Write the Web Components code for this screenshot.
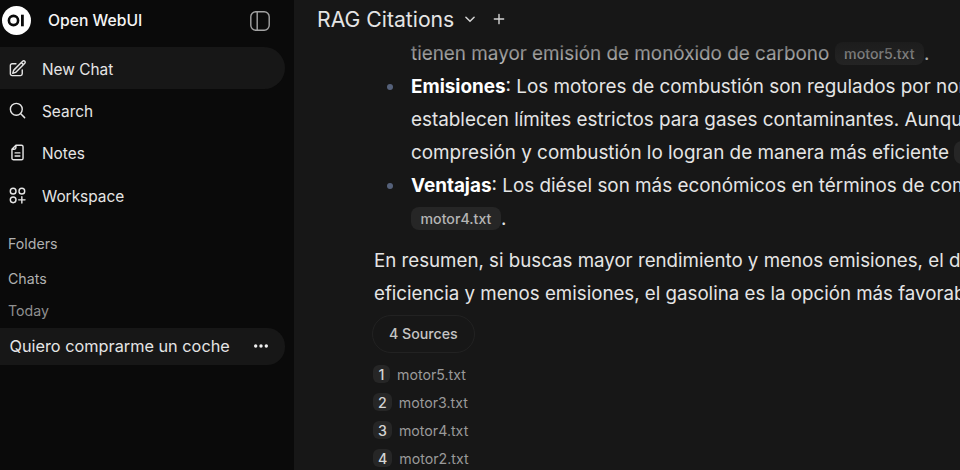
<!DOCTYPE html>
<html>
<head>
<meta charset="utf-8">
<style>
    html, body {
        margin: 0;
        height: 100%;
        background: #171717;
        overflow: hidden;
        font-family: Inter, "Liberation Sans", sans-serif;
    }
</style>
</head>
<body>
<app-shell>
    <side-bar slot="side">
        <nav-item label="New Chat" icon="edit" active></nav-item>
        <nav-item label="Search" icon="search"></nav-item>
        <nav-item label="Notes" icon="notes"></nav-item>
        <nav-item label="Workspace" icon="workspace"></nav-item>
    </side-bar>
    <chat-view slot="main">
        <chat-message></chat-message>
    </chat-view>
</app-shell>

<script>
const ICONS = {
    edit: `<path d="m16.862 4.487 1.687-1.688a1.875 1.875 0 1 1 2.652 2.652L10.582 16.07a4.5 4.5 0 0 1-1.897 1.13L6 18l.8-2.685a4.5 4.5 0 0 1 1.13-1.897l8.932-8.931Zm0 0L19.5 7.125M18 14v4.75A2.25 2.25 0 0 1 15.75 21H5.25A2.25 2.25 0 0 1 3 18.75V8.25A2.25 2.25 0 0 1 5.25 6H10"/>`,
    search: `<path d="m21 21-5.197-5.197m0 0A7.5 7.5 0 1 0 5.196 5.196a7.5 7.5 0 0 0 10.607 10.607Z"/>`,
    notes: `<path d="M10 2.8h7a2 2 0 0 1 2 2v14.4a2 2 0 0 1-2 2H7a2 2 0 0 1-2-2V7.8Z M10 2.8v3a2 2 0 0 1-2 2H5 M9 12.5h6 M9 16.5h6"/>`,
    workspace: `<circle cx="6.5" cy="6.5" r="3.6"/><circle cx="17.5" cy="6.5" r="3.6"/><circle cx="6.5" cy="17.5" r="3.6"/><path d="M17.5 13.5v8 M13.5 17.5h8"/>`
};

class AppShell extends HTMLElement {
    constructor() {
        super();
        this.attachShadow({mode: 'open'});
        this.shadowRoot.innerHTML = `
        <style>
            :host {
                display: grid;
                grid-template-columns: 294px 1fr;
                width: 960px;
                height: 470px;
                overflow: hidden;
            }
        </style>
        <slot name="side"></slot>
        <slot name="main"></slot>
        `;
    }
}

class SideBar extends HTMLElement {
    constructor() {
        super();
        this.attachShadow({mode: 'open'});
        this.shadowRoot.innerHTML = `
        <style>
            :host {
                display: block;
                height: 470px;
                background: #0a0a0a;
                color: #e5e5e5;
                overflow: hidden;
            }
            .top {
                display: flex;
                align-items: center;
                height: 41px;
                padding: 0 0 0 2px;
            }
            .brand {
                margin-left: 17px;
                font-size: 15.7px;
                font-weight: 500;
                color: #f5f5f5;
            }
            .toggle {
                margin-left: auto;
                margin-right: 24px;
                display: flex;
                color: #a3a3a3;
            }
            .nav {
                display: flex;
                flex-direction: column;
                padding: 6px 9px 0 0;
                gap: 0;
            }
            .label {
                padding-left: 8px;
                font-size: 14.2px;
                line-height: 20px;
                color: #b0b0b0;
            }
            .folders { margin-top: 17px; }
            .chats { margin-top: 15px; }
            .today { margin-top: 12px; color: #8f8f8f; }
            .chat {
                display: flex;
                align-items: center;
                justify-content: space-between;
                height: 37px;
                margin: 7px 9px 0 0;
                padding: 0 16px 0 9.5px;
                background: #171717;
                border-radius: 0 18px 18px 0;
                font-size: 16.3px;
                color: #e5e5e5;
            }
            .dots { display: flex; }
        </style>
        <div class="top">
            <svg width="29" height="29" viewBox="0 0 29 29">
                <circle cx="14.5" cy="14.5" r="14.5" fill="#fff"/>
                <circle cx="11.5" cy="14.5" r="4.6" fill="none" stroke="#0a0a0a" stroke-width="2.6"/>
                <rect x="19" y="8.7" width="2.8" height="11.6" fill="#0a0a0a"/>
            </svg>
            <span class="brand">Open WebUI</span>
            <span class="toggle">
                <svg width="20" height="20" viewBox="0 0 20 20" fill="none" stroke="currentColor" stroke-width="1.4">
                    <rect x="0.8" y="0.8" width="18.4" height="18.4" rx="5"/>
                    <path d="M7.2 1v18"/>
                </svg>
            </span>
        </div>
        <div class="nav"><slot></slot></div>
        <div class="label folders">Folders</div>
        <div class="label chats">Chats</div>
        <div class="label today">Today</div>
        <div class="chat">
            <span>Quiero comprarme un coche</span>
            <span class="dots">
                <svg width="16" height="16" viewBox="0 0 16 16" fill="#f0f0f0">
                    <circle cx="2.7" cy="8" r="1.7"/><circle cx="8" cy="8" r="1.7"/><circle cx="13.3" cy="8" r="1.7"/>
                </svg>
            </span>
        </div>
        `;
    }
}

class NavItem extends HTMLElement {
    connectedCallback() {
        if (this.shadowRoot) return;
        this.attachShadow({mode: 'open'});
        this.shadowRoot.innerHTML = `
        <style>
            :host {
                display: flex;
                align-items: center;
                gap: 15px;
                height: 42.4px;
                padding-left: 8px;
                font-size: 15.4px;
                color: #e5e5e5;
                border-radius: 0 21px 21px 0;
            }
            :host([active]) { background: #171717; }
            svg { flex: none; }
            span { position: relative; top: 1px; }
        </style>
        <svg width="19" height="19" viewBox="0 0 24 24" fill="none" stroke="currentColor" stroke-width="1.8" stroke-linecap="round" stroke-linejoin="round">${ICONS[this.getAttribute('icon')]}</svg>
        <span>${this.getAttribute('label')}</span>
        `;
    }
}

class ChatView extends HTMLElement {
    constructor() {
        super();
        this.attachShadow({mode: 'open'});
        this.shadowRoot.innerHTML = `
        <style>
            :host {
                display: block;
                position: relative;
                height: 470px;
                background: #171717;
                overflow: hidden;
            }
            .bar {
                position: absolute;
                top: 0;
                left: 0;
                right: 0;
                height: 72px;
                background: linear-gradient(#171717 0, #171717 27px, rgba(23,23,23,0.8) 34px, rgba(23,23,23,0) 72px);
                pointer-events: none;
            }
            .title {
                display: flex;
                align-items: center;
                height: 38px;
                padding-left: 23px;
                font-size: 21.2px;
                color: #e5e5e5;
            }
            .title svg { margin-left: 9px; color: #d4d4d4; }
            .title svg + svg { margin-left: 15px; }
        </style>
        <slot></slot>
        <div class="bar">
            <div class="title">
                <span>RAG Citations</span>
                <svg width="14" height="14" viewBox="0 0 24 24" fill="none" stroke="currentColor" stroke-width="2.6" stroke-linecap="round" stroke-linejoin="round"><path d="m5 9 7 7 7-7"/></svg>
                <svg width="14" height="14" viewBox="0 0 24 24" fill="none" stroke="currentColor" stroke-width="2.4" stroke-linecap="round"><path d="M12 4v16 M4 12h16"/></svg>
            </div>
        </div>
        `;
    }
}

class CitationChip extends HTMLElement {
    constructor() {
        super();
        this.attachShadow({mode: 'open'});
        this.shadowRoot.innerHTML = `
        <style>
            :host {
                display: inline-block;
                padding: 0 9.5px;
                height: 23px;
                line-height: 23px;
                vertical-align: 1px;
                border-radius: 8px;
                background: #262626;
                font-size: 14.2px;
                font-weight: 500;
                color: #b5b5b5;
            }
        </style>
        <slot></slot>
        `;
    }
}

class SourceRow extends HTMLElement {
    connectedCallback() {
        if (this.shadowRoot) return;
        this.attachShadow({mode: 'open'});
        this.shadowRoot.innerHTML = `
        <style>
            :host {
                display: flex;
                align-items: center;
                gap: 7px;
                height: 28px;
                margin-left: -1px;
                font-size: 14.2px;
                color: #9a9a9a;
            }
            .num {
                display: flex;
                align-items: center;
                justify-content: center;
                min-width: 7px;
                height: 18px;
                padding: 0 5px;
                border-radius: 6px;
                background: #262626;
                font-size: 14.2px;
                font-weight: 500;
                color: #d4d4d4;
            }
        </style>
        <span class="num">${this.getAttribute('n')}</span>
        <span><slot></slot></span>
        `;
    }
}

class ChatMessage extends HTMLElement {
    constructor() {
        super();
        this.attachShadow({mode: 'open'});
        this.shadowRoot.innerHTML = `
        <style>
            :host {
                display: block;
                padding: 37px 0 0 80px;
                font-size: 18.86px;
                line-height: 33px;
                color: #e5e5e5;
                white-space: nowrap;
            }
            ul {
                margin: 0;
                padding: 0 0 0 37px;
                list-style: none;
            }
            li { position: relative; }
            li.dot::before {
                content: "";
                position: absolute;
                left: -24px;
                top: 14px;
                width: 6px;
                height: 6px;
                border-radius: 50%;
                background: #55617a;
            }
            b { font-weight: 700; color: #fff; }
            p { margin: 9px 0 0; font-size: 18.72px; }
            .sources {
                display: inline-flex;
                align-items: center;
                height: 36px;
                margin: 5px 0 0 -2px;
                padding: 0 16px;
                border: 1px solid #222;
                border-radius: 19px;
                font-size: 14.2px;
                font-weight: 500;
                line-height: 20px;
                color: #c4c4c4;
            }
            .list { margin-top: 7px; }
        </style>
        <ul>
            <li>tienen mayor emisión de monóxido de carbono <citation-chip>motor5.txt</citation-chip><span>.</span></li>
            <li class="dot"><b>Emisiones</b>: Los motores de combustión son regulados por normas</li>
            <li>establecen límites estrictos para gases contaminantes. Aunque</li>
            <li>compresión y combustión lo logran de manera más eficiente <citation-chip>motor4.txt</citation-chip></li>
            <li class="dot"><b>Ventajas</b>: Los diésel son más económicos en términos de combustible</li>
            <li><citation-chip>motor4.txt</citation-chip><span>.</span></li>
        </ul>
        <p>En resumen, si buscas mayor rendimiento y menos emisiones, el diésel<br>eficiencia y menos emisiones, el gasolina es la opción más favorable</p>
        <div class="sources">4 Sources</div>
        <div class="list">
            <source-row n="1">motor5.txt</source-row>
            <source-row n="2">motor3.txt</source-row>
            <source-row n="3">motor4.txt</source-row>
            <source-row n="4">motor2.txt</source-row>
        </div>
        `;
    }
}

customElements.define('citation-chip', CitationChip);
customElements.define('source-row', SourceRow);
customElements.define('chat-message', ChatMessage);
customElements.define('chat-view', ChatView);
customElements.define('nav-item', NavItem);
customElements.define('side-bar', SideBar);
customElements.define('app-shell', AppShell);
</script>
</body>
</html>
